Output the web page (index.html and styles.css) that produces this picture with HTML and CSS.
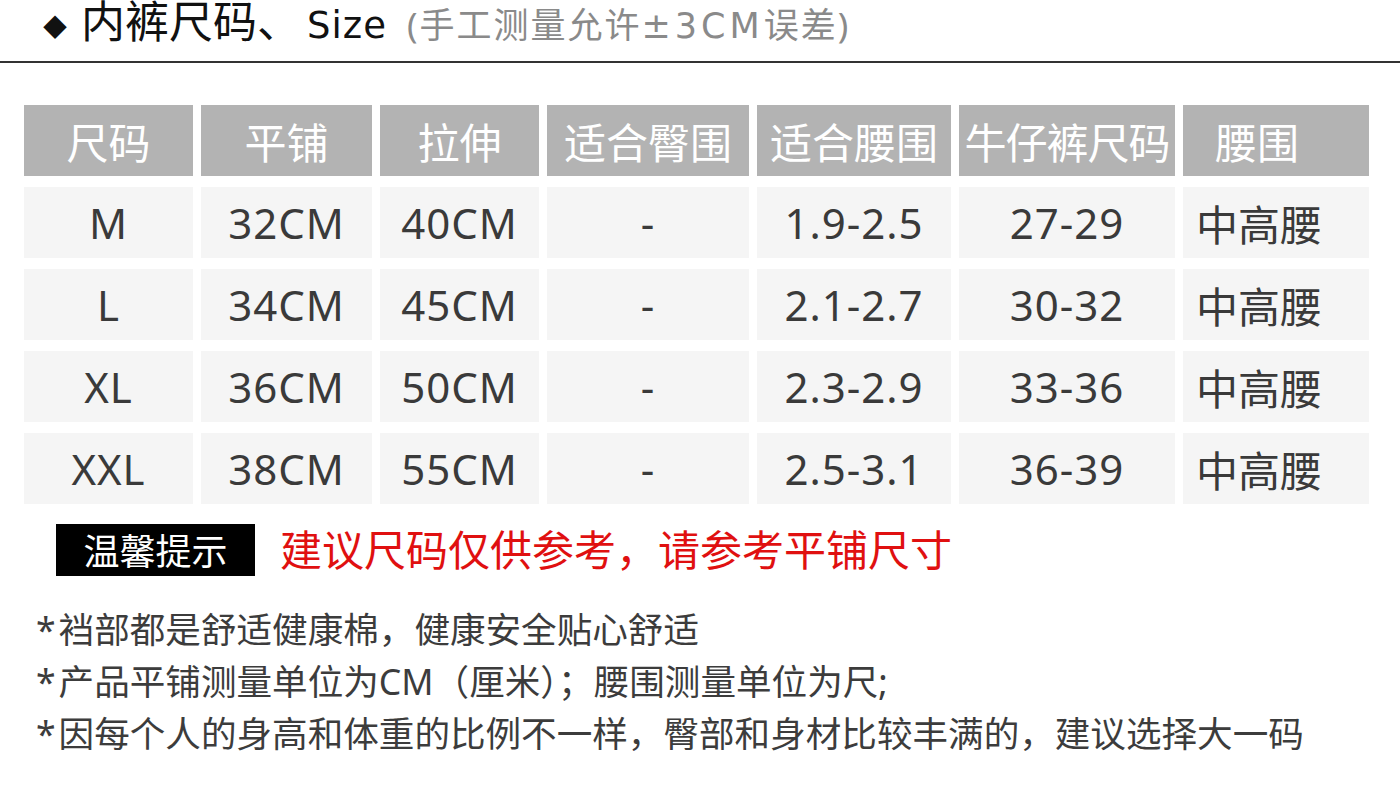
FILE: index.html
```html
<!DOCTYPE html>
<html lang="zh-CN">
<head>
<meta charset="utf-8">
<title>内裤尺码</title>
<link rel="stylesheet" href="styles.css">
</head>
<body>
<div class="page">
  <header class="title-bar">
    <span class="diamond">◆</span>
    <span class="title">内裤尺码、<span class="title-latin">Size</span></span>
    <span class="subtitle">(手工测量允许<span class="sub-latin">±3CM</span>误差)</span>
  </header>

  <div class="size-table">
    <div class="cell head">尺码</div>
    <div class="cell head">平铺</div>
    <div class="cell head">拉伸</div>
    <div class="cell head">适合臀围</div>
    <div class="cell head">适合腰围</div>
    <div class="cell head tight">牛仔裤尺码</div>
    <div class="cell head last-head">腰围</div>

    <div class="cell">M</div>
    <div class="cell">32CM</div>
    <div class="cell">40CM</div>
    <div class="cell">-</div>
    <div class="cell">1.9-2.5</div>
    <div class="cell">27-29</div>
    <div class="cell last">中高腰</div>

    <div class="cell">L</div>
    <div class="cell">34CM</div>
    <div class="cell">45CM</div>
    <div class="cell">-</div>
    <div class="cell">2.1-2.7</div>
    <div class="cell">30-32</div>
    <div class="cell last">中高腰</div>

    <div class="cell">XL</div>
    <div class="cell">36CM</div>
    <div class="cell">50CM</div>
    <div class="cell">-</div>
    <div class="cell">2.3-2.9</div>
    <div class="cell">33-36</div>
    <div class="cell last">中高腰</div>

    <div class="cell">XXL</div>
    <div class="cell">38CM</div>
    <div class="cell">55CM</div>
    <div class="cell">-</div>
    <div class="cell">2.5-3.1</div>
    <div class="cell">36-39</div>
    <div class="cell last">中高腰</div>
  </div>

  <div class="tip-row">
    <span class="tip-badge">温馨提示</span>
    <span class="tip-text">建议尺码仅供参考，请参考平铺尺寸</span>
  </div>

  <ul class="notes">
    <li><span class="star">*</span>裆部都是舒适健康棉，健康安全贴心舒适</li>
    <li><span class="star">*</span>产品平铺测量单位为CM（厘米）；腰围测量单位为尺;</li>
    <li><span class="star">*</span>因每个人的身高和体重的比例不一样，臀部和身材比较丰满的，建议选择大一码</li>
  </ul>
</div>
</body>
</html>
```

FILE: styles.css
```css
* {
  box-sizing: border-box;
}

html, body {
  margin: 0;
  padding: 0;
  background: #ffffff;
}

body {
  font-family: "Noto Sans", "Noto Sans CJK SC", sans-serif;
  color: #333333;
  width: 1400px;
  height: 800px;
  overflow: hidden;
}

.page {
  width: 1400px;
}

.title-bar {
  display: flex;
  align-items: baseline;
  height: 63px;
  padding-left: 43px;
  border-bottom: 2px solid #333333;
  line-height: 42px;
  padding-top: 0;
}

.diamond {
  font-size: 24px;
  color: #111111;
  margin-right: 14px;
  position: relative;
  top: -2px;
}

.title {
  font-size: 44px;
  color: #111111;
  margin-right: 20px;
}

.title-latin {
  font-family: "DejaVu Sans", sans-serif;
  font-size: 37px;
  letter-spacing: 1px;
  margin-left: 6px;
}

.subtitle {
  font-size: 35px;
  letter-spacing: 2px;
  color: #8a8a8a;
}

.sub-latin {
  font-family: "DejaVu Sans", sans-serif;
  letter-spacing: 4px;
}

.size-table {
  display: grid;
  grid-template-columns: 169px 171px 159px 202px 194px 216px 186px;
  grid-auto-rows: 71px;
  column-gap: 8px;
  row-gap: 11px;
  margin: 42px 0 0 24px;
}

.cell {
  background: #f5f5f5;
  display: flex;
  align-items: center;
  justify-content: center;
  font-size: 42px;
  letter-spacing: 1px;
  color: #3a3a3a;
  white-space: nowrap;
}

.cell.head {
  background: #b3b3b3;
  color: #ffffff;
  font-size: 42px;
  letter-spacing: 0;
}

.cell.tight {
  letter-spacing: -1px;
}

.cell.last-head {
  justify-content: flex-start;
  padding-left: 32px;
}

.cell.last {
  justify-content: flex-start;
  padding-left: 13px;
  letter-spacing: 0;
}

.tip-row {
  display: flex;
  align-items: center;
  margin: 15px 0 0 56px;
}

.tip-badge {
  display: flex;
  align-items: center;
  justify-content: center;
  width: 199px;
  height: 52px;
  background: #000000;
  color: #ffffff;
  font-size: 36px;
}

.tip-text {
  margin-left: 25px;
  font-size: 42px;
  color: #e01010;
  position: relative;
  top: -2px;
}

.notes {
  list-style: none;
  margin: 23px 0 0 36px;
  padding: 0;
}

.notes li {
  font-size: 35.6px;
  line-height: 52px;
  height: 52px;
  color: #3c3c3c;
  white-space: nowrap;
}

.star {
  margin-right: 3px;
}
```
